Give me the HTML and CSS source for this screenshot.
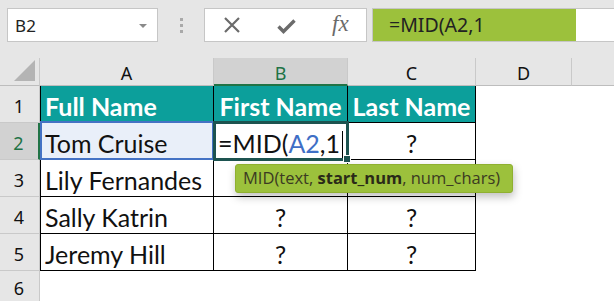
FILE: index.html
```html
<!DOCTYPE html>
<html>
<head>
<meta charset="utf-8">
<link rel="stylesheet" href="styles.css">
</head>
<body>
<div class="app">
  <div class="toolbar">
    <div class="namebox">
      <span class="name">B2</span>
      <span class="arrow"></span>
    </div>
    <div class="grip"><i></i><i></i><i></i></div>
    <div class="fnbox">
      <svg class="ic-x" width="18" height="18" viewBox="0 0 18 18"><path d="M2 2 L16 16 M16 2 L2 16" stroke="#6b6b6b" stroke-width="2.2" fill="none"/></svg>
      <svg class="ic-check" width="19" height="15" viewBox="0 0 19 15"><path d="M1.5 7.5 L6.5 12.5 L17.5 1.5" stroke="#6b6b6b" stroke-width="3.4" fill="none"/></svg>
      <span class="fx">fx</span>
    </div>
    <div class="formula">
      <div class="formula-hl">=MID(A2,1</div>
    </div>
  </div>

  <div class="sheet">
    <div class="corner"><span class="tri"></span></div>
    <div class="colh">A</div>
    <div class="colh sel">B</div>
    <div class="colh">C</div>
    <div class="colh">D</div>
    <div class="colh last"></div>

    <div class="rowh">1</div>
    <div class="c t hd left">Full Name</div>
    <div class="c t hd">First Name</div>
    <div class="c t hd">Last Name</div>
    <div class="c"></div>
    <div class="c"></div>

    <div class="rowh sel">2</div>
    <div class="c t left ref">Tom Cruise</div>
    <div class="c t active"><span class="edit">=MID(<span class="blue">A2</span>,1<span class="caret"></span></span></div>
    <div class="c t q">?</div>
    <div class="c"></div>
    <div class="c"></div>

    <div class="rowh">3</div>
    <div class="c t left">Lily Fernandes</div>
    <div class="c t q"></div>
    <div class="c t q"></div>
    <div class="c"></div>
    <div class="c"></div>

    <div class="rowh">4</div>
    <div class="c t left">Sally Katrin</div>
    <div class="c t q">?</div>
    <div class="c t q">?</div>
    <div class="c"></div>
    <div class="c"></div>

    <div class="rowh">5</div>
    <div class="c t left">Jeremy Hill</div>
    <div class="c t q">?</div>
    <div class="c t q">?</div>
    <div class="c"></div>
    <div class="c"></div>

    <div class="rowh lastrow">6</div>
    <div class="c"></div>
    <div class="c"></div>
    <div class="c"></div>
    <div class="c"></div>
    <div class="c"></div>

    <div class="tooltip">MID(text, <b>start_num</b>, num_chars)</div>
  </div>
</div>
</body>
</html>
```

FILE: styles.css
```css
* { box-sizing: border-box; }
html, body { margin: 0; padding: 0; }
body {
  width: 614px;
  height: 301px;
  overflow: hidden;
  background: #e6e6e6;
  font-family: "Noto Sans", "Open Sans", sans-serif;
}
.app { width: 614px; }

.toolbar {
  height: 58px;
  display: flex;
  align-items: flex-start;
  padding: 8px 0 0 7px;
}
.namebox {
  width: 151px;
  height: 34px;
  background: #fff;
  border: 1px solid #c6c6c6;
  display: flex;
  align-items: center;
  justify-content: space-between;
  padding: 0 10px 0 7px;
}
.name { font-size: 17px; color: #222; letter-spacing: 0.3px; }
.arrow {
  width: 0; height: 0;
  border-left: 4px solid transparent;
  border-right: 4px solid transparent;
  border-top: 4px solid #8a8a8a;
  margin-top: 1px;
}
.grip {
  width: 46px;
  height: 34px;
  display: flex;
  flex-direction: column;
  align-items: center;
  justify-content: center;
  gap: 3px;
}
.grip i { display: block; width: 3px; height: 3px; background: #a9a9a9; }
.fnbox {
  width: 163px;
  height: 34px;
  background: #fff;
  border: 1px solid #c6c6c6;
  display: flex;
  align-items: center;
  padding-left: 18px;
}
.ic-x { margin-right: 36px; }
.ic-check { margin-right: 36px; margin-top: 2px; }
.fx {
  font-family: "Liberation Serif", "DejaVu Serif", serif;
  font-style: italic;
  font-size: 23px;
  color: #6a6a6a;
  margin-top: -3px;
}
.formula {
  flex: 1;
  height: 34px;
  margin-left: 5px;
  background: #fff;
  border-top: 1px solid #c6c6c6;
  border-bottom: 1px solid #c6c6c6;
  border-left: 1px solid #c6c6c6;
}
.formula-hl {
  width: 203px;
  height: 32px;
  background: #9cc13c;
  font-size: 19.5px;
  color: #222;
  padding: 2px 0 0 16px;
  line-height: 27px;
}

.sheet {
  position: relative;
  display: grid;
  grid-template-columns: 40px 174px 134px 128px 96px 42px;
  grid-template-rows: 28px 37px 37px 37px 37px 37px 30px;
  background: #fff;
}
.corner {
  background: #e6e6e6;
  border-right: 1px solid #c9c9c9;
  border-bottom: 1px solid #bdbdbd;
  position: relative;
}
.tri {
  position: absolute;
  right: 4px; bottom: 4px;
  width: 0; height: 0;
  border-left: 21px solid transparent;
  border-bottom: 21px solid #b4b4b4;
}
.colh {
  background: #e6e6e6;
  border-right: 1px solid #c9c9c9;
  border-bottom: 1px solid #bdbdbd;
  font-family: "Noto Sans", sans-serif;
  font-size: 18px;
  color: #111;
  text-align: center;
  line-height: 28px;
  padding-top: 1px;
}
.colh.sel {
  background: #d2d2d2;
  color: #217346;
  border-bottom: 2px solid #217346;
}
.colh.last { border-right: none; }
.rowh {
  background: #e6e6e6;
  border-right: 1px solid #c9c9c9;
  border-bottom: 1px solid #c9c9c9;
  font-family: "Noto Sans", sans-serif;
  font-size: 18px;
  color: #111;
  text-align: center;
  line-height: 40px;
  padding-right: 1px;
}
.rowh.lastrow { line-height: 30px; padding-top: 2px; border-bottom: none; }
.rowh.sel {
  background: #d2d2d2;
  color: #217346;
  border-right: 2px solid #217346;
}
.c { background: #fff; }
.c.t {
  border-right: 1px solid #000;
  border-bottom: 1px solid #000;
  font-family: "Lato", sans-serif;
  font-size: 25px;
  color: #111;
  line-height: 40px;
  text-align: center;
  white-space: nowrap;
}
.c.t.left { text-align: left; padding-left: 5px; box-shadow: inset 1px 0 0 #000; }
.c.hd {
  background: #0c9f9b;
  color: #fff;
  font-weight: bold;
  font-size: 25px;
}
.c.ref {
  background: #e9eff9;
  position: relative;
  overflow: visible;
}
.c.ref::before {
  content: "";
  position: absolute;
  left: 0; top: -2px; right: -1px; bottom: -1px;
  border: 2px solid #4472c4;
  pointer-events: none;
}
.c.active {
  position: relative;
  text-align: left;
  padding-left: 4px;
  overflow: visible;
}
.c.active::before {
  content: "";
  position: absolute;
  left: -1px; top: -2px; right: -2px; bottom: -2px;
  border: 3px solid #1d5350;
  pointer-events: none;
}
.c.active::after {
  content: "";
  position: absolute;
  right: -4px; bottom: -4px;
  width: 6px; height: 6px;
  background: #1d5350;
  border: 1px solid #fff;
}
.edit { position: relative; }
.blue { color: #3f6fc6; }
.caret {
  display: inline-block;
  width: 1px;
  height: 27px;
  background: #000;
  vertical-align: -5px;
  margin-left: 2px;
}
.tooltip {
  position: absolute;
  left: 235px;
  top: 106px;
  width: 278px;
  height: 29px;
  background: #9cc13c;
  border: 1px solid #8fb030;
  border-radius: 3px;
  box-shadow: 1px 4px 9px rgba(0,0,0,0.25);
  font-family: "Open Sans", sans-serif;
  font-size: 16.5px;
  color: #3b3a22;
  line-height: 26px;
  padding-left: 7px;
  white-space: nowrap;
}
.tooltip b { color: #2a2a18; }
```
